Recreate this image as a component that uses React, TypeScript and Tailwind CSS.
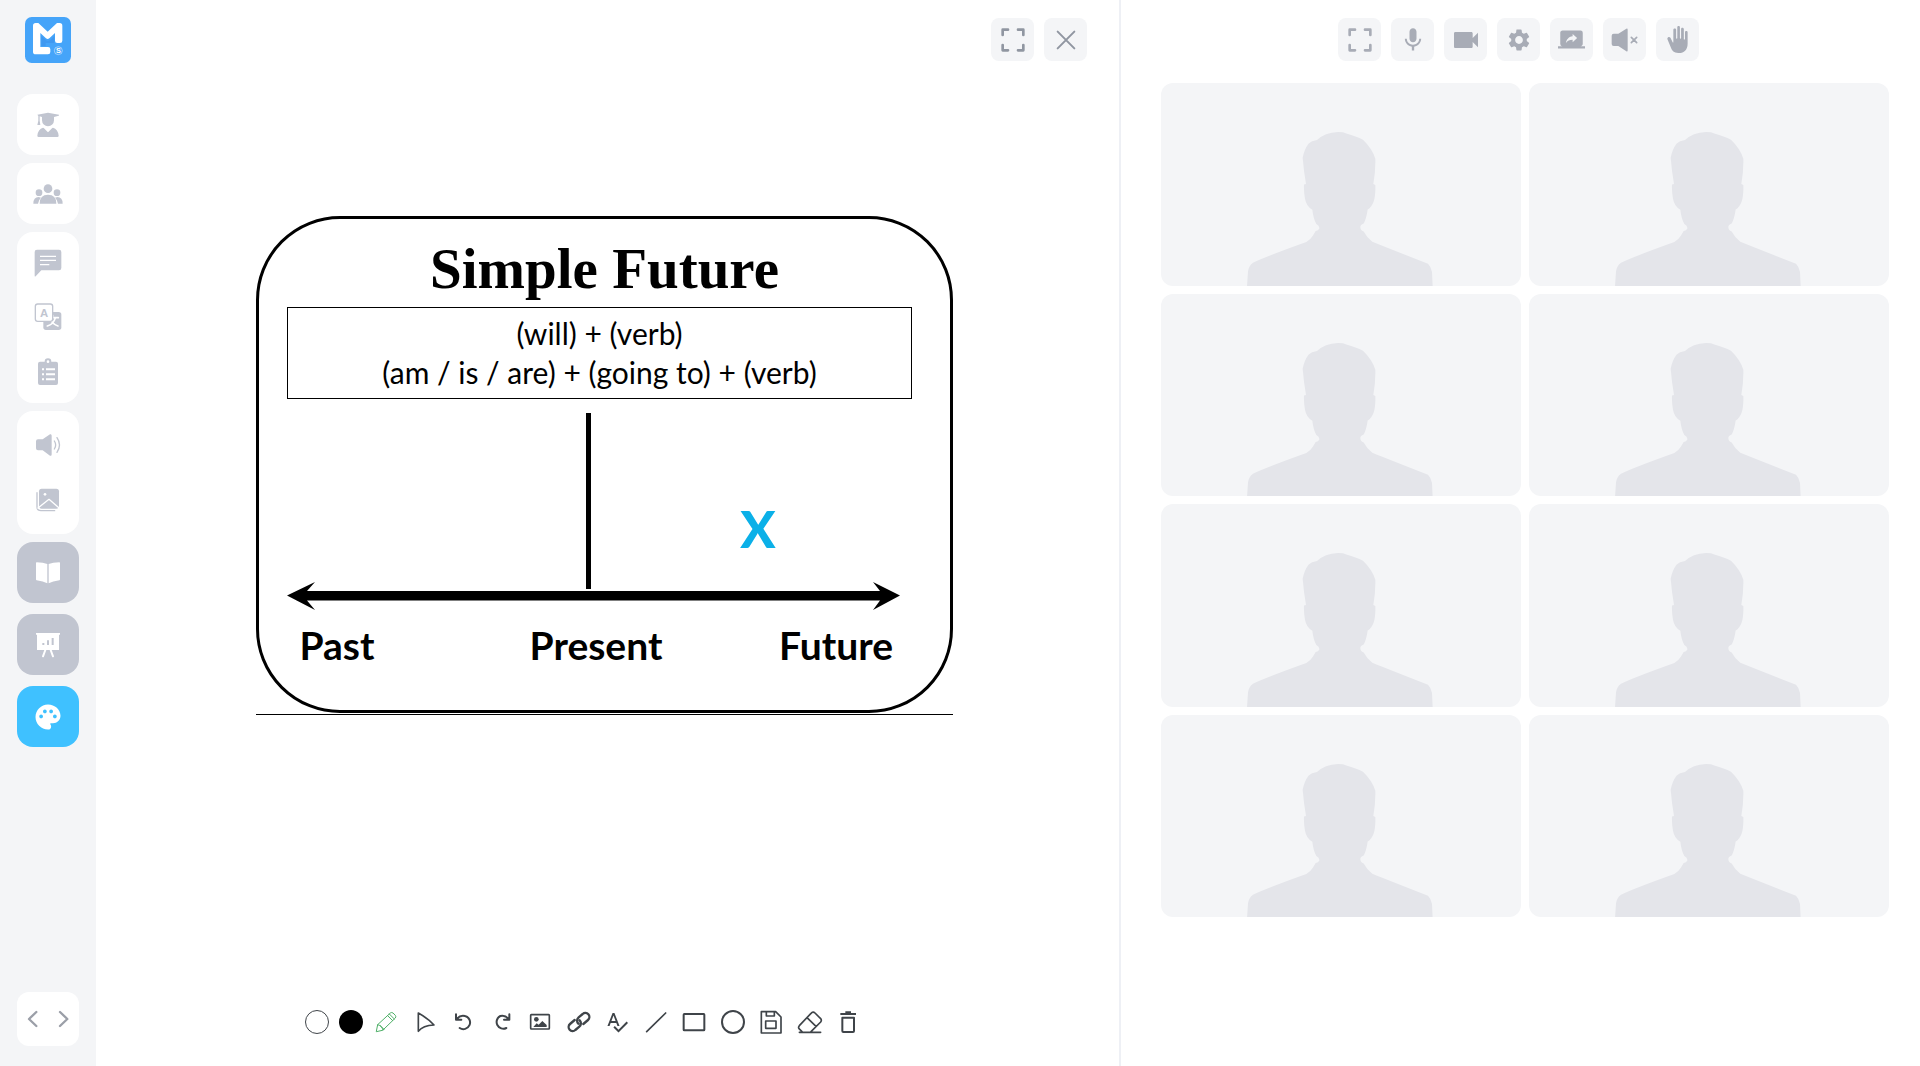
import type { ReactNode } from "react";
import { MdMic, MdPalette, MdScreenShare, MdSettings, MdSpellcheck, MdVideocam } from "react-icons/md";
import { IoHandRight } from "react-icons/io5";

/* Icons are drawn on a 90-unit square centred on the origin, three units per pixel. */
function Glyph({ children, stroke }: { children: ReactNode; stroke?: number }) {
  return (
    <svg
      viewBox="-45 -45 90 90"
      aria-hidden="true"
      className="size-[30px] shrink-0"
      fill={stroke ? "none" : "currentColor"}
      stroke={stroke ? "currentColor" : "none"}
      strokeWidth={stroke}
      strokeLinecap="round"
      strokeLinejoin="round"
    >
      {children}
    </svg>
  );
}

const StudentIcon = () => (
  <Glyph>
    <path d="M-32 -31L0 -37L33 -31Q34 -29 32 -28L18 -24V-14A18 18 0 0 1 -18 -14V-24L-25 -26V-13L-23 0H-32L-29 -13V-27Z" />
    <path d="M-32 32Q-30 12 -15 8Q-12 8 0 22Q12 8 15 8Q30 12 32 32Q32 36 28 36H-28Q-32 36 -32 32Z" />
  </Glyph>
);

const GroupIcon = () => (
  <Glyph>
    <circle cx="0" cy="-16" r="13" />
    <circle cx="-27" cy="-4" r="10" />
    <circle cx="27" cy="-4" r="10" />
    <path d="M-25 29Q-25 2 0 2Q25 2 25 29Z" />
    <path d="M-44 29Q-44 9 -28 9L-21 11Q-29 18 -30 29ZM44 29Q44 9 28 9L21 11Q29 18 30 29Z" />
  </Glyph>
);

const ChatIcon = () => (
  <Glyph>
    <path d="M-33 -40H33Q40 -40 40 -33V15Q40 22 33 22H-20L-37 40Q-40 42 -40 38V-33Q-40 -40 -33 -40Z" />
    <path d="M-24 -20H24M-24 -8H24M-24 5H4" stroke="#fff" strokeWidth="4" strokeLinecap="butt" />
  </Glyph>
);

const TranslateIcon = () => (
  <Glyph>
    <rect x="-14" y="-15" width="54" height="54" rx="8" />
    <path d="M-3 2H31M14 -5V2M22 3Q16 22 -2 27M6 5Q14 22 30 27" stroke="#fff" strokeWidth="5" fill="none" />
    <rect x="-38" y="-39" width="52" height="52" rx="7" fill="#fff" stroke="currentColor" strokeWidth="4" />
    <text x="-12" y="-1" textAnchor="middle" fontSize="34" fontWeight="700" fontFamily="Liberation Sans, sans-serif">
      A
    </text>
  </Glyph>
);

const ClipboardIcon = () => (
  <Glyph>
    <path
      fillRule="evenodd"
      d="M-24 -31H-10A10 10 0 0 1 10 -31H24Q30 -31 30 -25V33Q30 39 24 39H-24Q-30 39 -30 33V-25Q-30 -31 -24 -31ZM-4 -31A4 4 0 0 0 4 -31A4 4 0 0 0 -4 -31Z"
    />
    <path d="M-6 -8H21M-6 7H21M-6 22H21M-18 -8H-12M-18 7H-12M-18 22H-12" stroke="#fff" strokeWidth="6" strokeLinecap="butt" />
  </Glyph>
);

const SpeakerIcon = () => (
  <Glyph>
    <path d="M-30 -17H-16L6 -32Q11 -34 11 -28V28Q11 34 6 32L-16 16H-30Q-36 16 -36 10V-11Q-36 -17 -30 -17Z" />
    <path d="M19 -12Q27 0 19 12M27 -22Q42 0 27 22" fill="none" stroke="currentColor" strokeWidth="4" />
  </Glyph>
);

const GalleryIcon = () => (
  <Glyph>
    <rect x="-27" y="-34" width="60" height="60" rx="8" />
    <path d="M-33 -22V20Q-33 32 -21 32H20" fill="none" stroke="currentColor" strokeWidth="4" />
    <circle cx="-9" cy="-17" r="4" fill="#fff" />
    <path d="M-30 24L3 -2L36 26" fill="none" stroke="#fff" strokeWidth="4" />
  </Glyph>
);

const BookIcon = () => (
  <Glyph>
    <path d="M-34 -32Q-14 -32 -2 -27V31Q-14 25 -34 22Q-36 22 -36 19V-30Q-36 -32 -34 -32ZM34 -32Q14 -32 2 -27V31Q14 25 34 22Q36 22 36 19V-30Q36 -32 34 -32Z" />
  </Glyph>
);

const BoardIcon = () => (
  <Glyph>
    <path d="M-36 -36H36V-31H33V15H-33V-31H-36Z" />
    <path d="M-8 15L-15 34M8 15L15 34" stroke="currentColor" strokeWidth="6" />
    <path d="M-14 0V-6M0 0V-14M14 0V-21" stroke="#c1c5d0" strokeWidth="6" strokeLinecap="butt" />
  </Glyph>
);

const FullscreenIcon = () => (
  <Glyph stroke={8}>
    <path d="M-31 -15V-31H-15M15 -31H31V-15M31 15V31H15M-15 31H-31V15" />
  </Glyph>
);

const MutedIcon = () => (
  <Glyph>
    <path d="M-34 -19H-20L4 -34Q8 -36 8 -31V31Q8 36 4 34L-20 18H-34Q-40 18 -40 12V-13Q-40 -19 -34 -19Z" />
    <path d="M19 -8L35 8M35 -8L19 8" stroke="currentColor" strokeWidth="5" />
  </Glyph>
);

const Logo = () => (
  <svg viewBox="0 0 138 138" role="img" aria-label="LMS" className="size-[46px]">
    <rect width="138" height="138" rx="20" fill="#45a4f9" />
    <path
      d="M32 18H40L68 44L96 18H104Q112 18 112 26V71Q112 78 105 78H97Q90 78 90 71V48L73 64Q68 68 63 64L46 48V90H69Q76 90 76 97V105Q76 112 69 112H32Q24 112 24 104V26Q24 18 32 18Z"
      fill="#fff"
    />
    <path d="M49 56L63 70Q70 73 77 68L88 58V78H62V87H49Z" fill="#3f98f0" />
    <circle cx="100" cy="101" r="12" fill="none" stroke="#fff" strokeOpacity="0.7" strokeWidth="2" />
    <text x="100" y="109" textAnchor="middle" fontSize="22" fontWeight="700" fill="#fff" fontFamily="Liberation Sans, sans-serif">
      S
    </text>
  </svg>
);

const groupClass = "flex w-[62px] flex-col overflow-hidden rounded-2xl bg-white text-[#c1c5d0]";

function Cell({ label, children }: { label: string; children: ReactNode }) {
  return (
    <button type="button" aria-label={label} className="flex w-full flex-1 items-center justify-center">
      {children}
    </button>
  );
}

function Sidebar() {
  return (
    <nav className="flex w-24 shrink-0 flex-col items-center bg-[#f4f5f7] pt-[17px] pb-5">
      <Logo />
      <div className="mt-[31px] flex flex-col gap-2">
        <div className={groupClass + " h-[61px]"}>
          <Cell label="Teacher"><StudentIcon /></Cell>
        </div>
        <div className={groupClass + " h-[61px]"}>
          <Cell label="Participants"><GroupIcon /></Cell>
        </div>
        <div className={groupClass + " h-[171px] py-1"}>
          <Cell label="Chat"><ChatIcon /></Cell>
          <Cell label="Translate"><TranslateIcon /></Cell>
          <Cell label="Tasks"><ClipboardIcon /></Cell>
        </div>
        <div className={groupClass + " h-[123px] py-1.5"}>
          <Cell label="Audio"><SpeakerIcon /></Cell>
          <Cell label="Images"><GalleryIcon /></Cell>
        </div>
      </div>
      <div className="mt-2 flex flex-col gap-[11px] text-white">
        <button type="button" aria-label="Book" className="flex h-[61px] w-[62px] items-center justify-center rounded-2xl bg-[#c1c5d0]">
          <BookIcon />
        </button>
        <button type="button" aria-label="Presentation" className="flex h-[61px] w-[62px] items-center justify-center rounded-2xl bg-[#c1c5d0]">
          <BoardIcon />
        </button>
        <button type="button" aria-label="Whiteboard" className="flex h-[61px] w-[62px] items-center justify-center rounded-2xl bg-[#3fc1ff]">
          <MdPalette className="size-[30px]" />
        </button>
      </div>
      <div className="mt-auto flex h-[54px] w-[62px] rounded-xl bg-white text-[#9b9fa8]">
        <button type="button" aria-label="Previous" className="flex flex-1 items-center justify-center">
          <Glyph stroke={7}><path d="M10 -21L-12 0L10 21" /></Glyph>
        </button>
        <button type="button" aria-label="Next" className="flex flex-1 items-center justify-center">
          <Glyph stroke={7}><path d="M-12 -21L10 0L-12 21" /></Glyph>
        </button>
      </div>
    </nav>
  );
}

function PanelButton({ label, children }: { label: string; children: ReactNode }) {
  return (
    <button type="button" aria-label={label} className="flex size-[43px] items-center justify-center rounded-lg bg-[#f4f5f7]">
      {children}
    </button>
  );
}

function Slide() {
  return (
    <div className="w-[697px] border-b border-black pb-px text-black">
      <article className="rounded-[84px] border-[3px] border-black pt-[18px] pb-[37px]">
        <h1 className="text-center font-['Liberation_Serif',serif] text-[57px] leading-[64px] font-bold">Simple Future</h1>
        <div className="mt-1.5 mr-[38px] ml-7 border border-black py-1.5 text-center font-['Lato',sans-serif] text-[30px] leading-[39px]">
          <p>(will) + (verb)</p>
          <p>(am / is / are) + (going to) + (verb)</p>
        </div>
        <svg viewBox="0 0 613 260" className="mt-[14px] ml-7 h-[260px] w-[613px]" fontFamily="Lato, sans-serif" fontWeight="700">
          <path d="M299 0H304V176H299Z" />
          <path d="M20 178H593L586 169L613 182.500L586 197L593 187.500H20L28 197L0 182.500L28 169Z" />
          <text x="471" y="135" textAnchor="middle" fontSize="52" fontWeight="900" fill="#0bb0e8">X</text>
          <g fontSize="39" textAnchor="middle">
            <text x="50" y="247">Past</text>
            <text x="309" y="247">Present</text>
            <text x="549" y="247">Future</text>
          </g>
        </svg>
      </article>
    </div>
  );
}

const tools: { label: string; icon: ReactNode; color?: string }[] = [
  {
    label: "Pencil",
    color: "text-[#4fb068]",
    icon: (
      <Glyph stroke={3}>
        <path d="M-29 28L-25 8L13 -27Q17 -30 21 -27L28 -20Q31 -16 28 -12L-9 24ZM-25 8Q-13 10 -9 24M5 -19L20 -4M10 -24L25 -9M-18 10L-6 22" />
      </Glyph>
    ),
  },
  { label: "Select", icon: <Glyph stroke={5}><path d="M-20 -27V28Q-6 10 27 9Q10 -10 -20 -27Z" /></Glyph> },
  { label: "Undo", icon: <Glyph stroke={6}><path d="M-21 -23V-7H-5M-20 -8Q-8 -22 6 -18A20 20 0 1 1 -10 18" /></Glyph> },
  { label: "Redo", icon: <Glyph stroke={6}><path d="M22 -23V-7H6M21 -8Q9 -22 -5 -18A20 20 0 1 0 13 18" /></Glyph> },
  {
    label: "Insert image",
    icon: (
      <Glyph stroke={5}>
        <rect x="-28" y="-22" width="56" height="43" rx="2" />
        <circle cx="-11" cy="-8" r="7" fill="currentColor" stroke="none" />
        <path d="M-20 15L-10 4L-4 8L7 -3L20 9V15Z" fill="currentColor" stroke="none" />
      </Glyph>
    ),
  },
  {
    label: "Insert link",
    icon: (
      <Glyph stroke={7}>
        <path d="M-13 -6L-27 6A12 12 0 0 0 -11 24L1 14A13 13 0 0 0 2 -5M13 6L27 -6A12 12 0 0 0 11 -24L-1 -14A13 13 0 0 0 -2 5" />
      </Glyph>
    ),
  },
  { label: "Text", icon: <MdSpellcheck className="size-6" /> },
  { label: "Line", icon: <Glyph stroke={5}><path d="M-28 29L29 -27" /></Glyph> },
  { label: "Rectangle", icon: <Glyph stroke={6}><rect x="-31" y="-24" width="62" height="49" rx="2" /></Glyph> },
  { label: "Ellipse", icon: <Glyph stroke={6}><circle cx="0" cy="0" r="33" /></Glyph> },
  {
    label: "Save",
    icon: (
      <Glyph stroke={5}>
        <path d="M-29 -31H14L30 -15V33H-29ZM-14 -31V-18H10V-31M-16 -3H15V19H-16Z" />
      </Glyph>
    ),
  },
  {
    label: "Eraser",
    icon: (
      <Glyph stroke={5}>
        <path d="M-32 31H32M-24 29L-33 20Q-36 16 -32 11L3 -26Q9 -33 15 -27L32 -10Q36 -6 32 0L3 29M-9 -13L18 13" />
      </Glyph>
    ),
  },
  {
    label: "Delete",
    icon: (
      <Glyph stroke={6}>
        <path d="M-23 -24H24M-8 -29H9" strokeLinecap="butt" />
        <path d="M-17 -13H18V27Q18 30 15 30H-14Q-17 30 -17 27Z" />
      </Glyph>
    ),
  },
];

function Toolbar() {
  return (
    <div role="toolbar" aria-label="Drawing tools" className="mr-[50px] flex items-center self-center text-[#3f4449]">
      <button type="button" aria-label="White" className="size-6 rounded-full border border-[#3f4449] bg-white" />
      <button type="button" aria-label="Black" className="ml-2.5 size-6 rounded-full bg-black" />
      <div className="ml-[11px] flex w-[486px] justify-between">
        {tools.map((tool) => (
          <button key={tool.label} type="button" aria-label={tool.label} className={"flex size-6 items-center justify-center " + (tool.color ?? "")}>
            {tool.icon}
          </button>
        ))}
      </div>
    </div>
  );
}

function Avatar() {
  return (
    <svg viewBox="34 38 1080 607" aria-hidden="true" className="size-full" fill="#e4e5ea">
      <path d="M292 648L295 603Q298 585 310 577Q350 558 470 515Q482 508 490 495L498 482Q506 481 509 474Q510 466 500 461Q491 445 488 418Q470 408 466 385Q462 365 463 342L469 341Q462 300 459 262Q464 236 477 219Q485 212 502 209Q525 187 565 185Q582 185 590 189Q620 197 640 208Q668 235 677 265Q678 300 671 341L677 344Q678 375 672 393Q666 410 654 417Q650 445 642 459Q632 463 632 470Q632 480 642 483Q652 502 668 514Q720 535 835 580Q845 590 847 605L849 648Z" />
    </svg>
  );
}

export default function App() {
  return (
    <div className="flex min-h-screen bg-white">
      <Sidebar />
      <div className="grid flex-1 grid-cols-[1023fr_801fr]">
        <main className="flex min-w-0 flex-col pt-[18px] pb-8">
          <header className="flex justify-end gap-2.5 pr-8 text-[#9096a1]">
            <PanelButton label="Full screen"><FullscreenIcon /></PanelButton>
            <PanelButton label="Close">
              <Glyph stroke={6}><path d="M-25 -25L25 25M25 -25L-25 25" /></Glyph>
            </PanelButton>
          </header>
          <section aria-label="Whiteboard" className="flex flex-1 items-start justify-center pt-[155px] pr-1.5">
            <Slide />
          </section>
          <Toolbar />
        </main>
        <aside className="min-w-0 border-l-2 border-[#eef0f5] pt-[18px]">
          <header className="flex justify-center gap-2.5 pr-1 text-[#a8acb6]">
            <PanelButton label="Full screen"><FullscreenIcon /></PanelButton>
            <PanelButton label="Microphone"><MdMic className="size-7" /></PanelButton>
            <PanelButton label="Camera"><MdVideocam className="size-8" /></PanelButton>
            <PanelButton label="Settings"><MdSettings className="size-[26px]" /></PanelButton>
            <PanelButton label="Share screen"><MdScreenShare className="size-[27px]" /></PanelButton>
            <PanelButton label="Mute sound"><MutedIcon /></PanelButton>
            <PanelButton label="Raise hand"><IoHandRight className="size-[27px]" /></PanelButton>
          </header>
          <ul className="mt-[22px] grid grid-cols-2 gap-2 pr-[31px] pl-10">
            {Array.from({ length: 8 }, (_, i) => (
              <li key={i} className="aspect-video overflow-hidden rounded-xl bg-[#f4f5f7]">
                <Avatar />
              </li>
            ))}
          </ul>
        </aside>
      </div>
    </div>
  );
}
